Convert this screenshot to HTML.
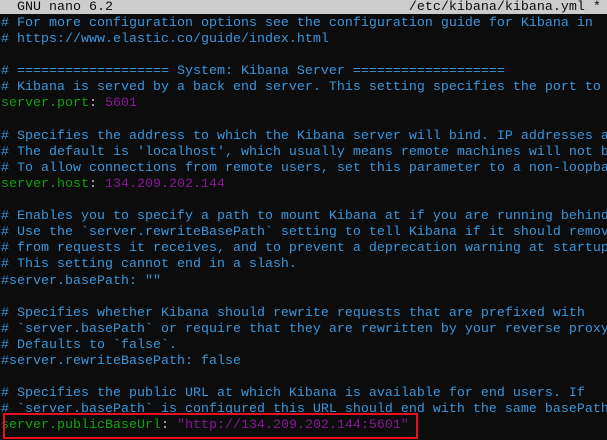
<!DOCTYPE html>
<html><head><meta charset="utf-8"><style>
html,body{margin:0;padding:0;background:#0c0c0c;width:607px;height:440px;overflow:hidden;position:relative}
.t{position:absolute;left:0;top:0;width:607px;height:14px;background:#cccccc;color:#0c0c0c;overflow:hidden}
pre{margin:0;font-family:"Liberation Mono",monospace;font-size:13.33px;line-height:16.1px;white-space:pre;position:absolute;left:1px;width:606px;overflow:hidden}
.c{color:#3a96dd}.g{color:#13a10e}.m{color:#881798}.w{color:#cccccc}
.box{position:absolute;left:3px;top:413px;width:411px;height:22px;border:2px solid #e81123}
</style></head><body>
<div class="t"><pre style="top:0px;left:1px;color:#0c0c0c">  GNU nano 6.2                                     /etc/kibana/kibana.yml *</pre></div>
<pre style="top:16px"><span class="c"># For more configuration options see the configuration guide for Kibana in
# https://www.elastic.co/guide/index.html</span>

<span class="c"># =================== System: Kibana Server ===================
# Kibana is served by a back end server. This setting specifies the port to use.</span>
<span class="g">server.port</span><span class="w">: </span><span class="m">5601</span>

<span class="c"># Specifies the address to which the Kibana server will bind. IP addresses and
# The default is 'localhost', which usually means remote machines will not be
# To allow connections from remote users, set this parameter to a non-loopback</span>
<span class="g">server.host</span><span class="w">: </span><span class="m">134.209.202.144</span>

<span class="c"># Enables you to specify a path to mount Kibana at if you are running behind a
# Use the `server.rewriteBasePath` setting to tell Kibana if it should remove
# from requests it receives, and to prevent a deprecation warning at startup.
# This setting cannot end in a slash.
#server.basePath: ""

# Specifies whether Kibana should rewrite requests that are prefixed with
# `server.basePath` or require that they are rewritten by your reverse proxy.
# Defaults to `false`.
#server.rewriteBasePath: false

# Specifies the public URL at which Kibana is available for end users. If
# `server.basePath` is configured this URL should end with the same basePath.</span>
<span class="g">server.publicBaseUrl</span><span class="w">: </span><span class="m">"http://134.209.202.144:5601"</span></pre>
<div class="box"></div>
</body></html>
